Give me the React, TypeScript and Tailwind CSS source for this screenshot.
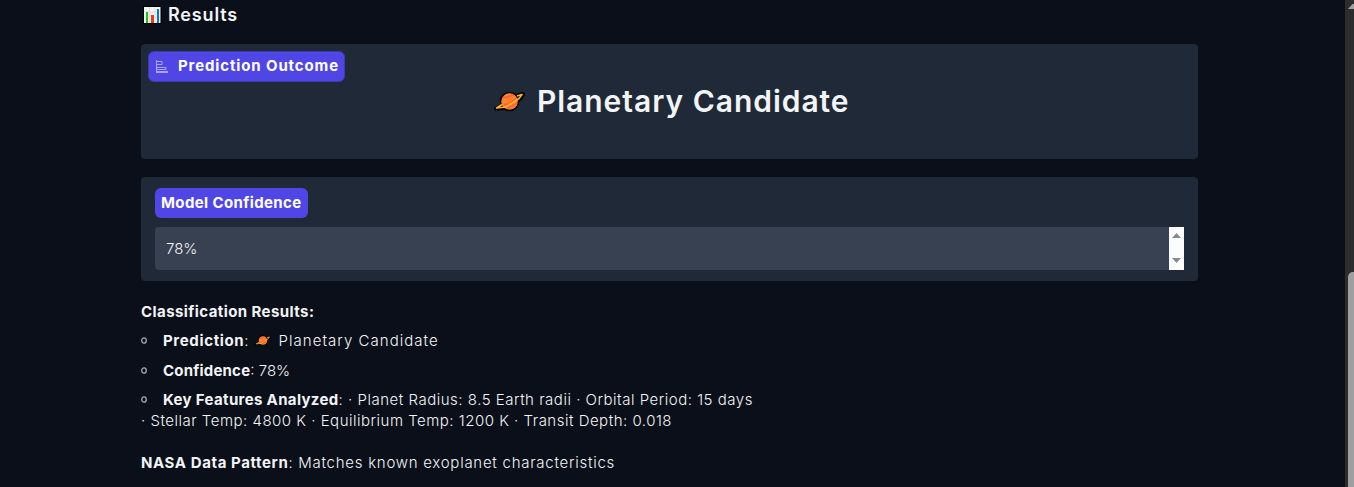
function Planet({ className }: { className: string }) {
  return (
    <svg viewBox="0 0 31 21" className={className} aria-hidden="true">
      <g stroke="#000" strokeLinejoin="round" strokeWidth="3">
        <circle cx="15.5" cy="10.5" r="8.300" />
        <path d="M8 14.500 2 17.500 13 17 27 7 29 3 23 4.500" fill="none" strokeWidth="4" />
      </g>
      <circle cx="15.5" cy="10.5" r="8.300" fill="#ff822d" />
      <path d="M9 6.500Q15 7 19 3.500M10 14Q16 13 22 8M13 17Q18 16 23 12" fill="none" stroke="#f9632f" strokeWidth="2" />
      <path d="M8 13.500 2.500 17 12 16 25 7.500 28 3.500 23 5" fill="none" stroke="#ffb02e" strokeWidth="1.6" strokeLinejoin="round" />
    </svg>
  );
}

function ChartEmoji() {
  return (
    <svg viewBox="0 0 19 18" className="h-[18px] w-[19px]" aria-hidden="true">
      <path d="M0 0h19v18H0z" fill="#000" />
      <path d="M1 1h16.500v16H1z" fill="#f4f4f4" />
      <path d="M1 6h16M1 11h16M6.500 1v16M12 1v16" stroke="#ddd" />
      <path d="M3 6h2v11H3z" fill="#16c60c" />
      <path d="M8 9h3v8H8z" fill="#f03a17" />
      <path d="M14 3h2v14h-2z" fill="#0078d4" />
    </svg>
  );
}

function LabelIcon() {
  return (
    <svg viewBox="0 0 14 14" className="mr-[9px] h-[14px] w-[14px]" fill="none" stroke="#a9a3f2" aria-hidden="true">
      <path d="M1.500 0v13M1 1.500h6v3H1M1 7.500h10v2H1" />
      <path d="M1 12h12" strokeWidth="2" />
    </svg>
  );
}

function Bullet() {
  return (
    <svg viewBox="0 0 6 7" className="mr-[16px] h-[7px] w-[6px] shrink-0" aria-hidden="true">
      <ellipse cx="3" cy="3.500" rx="2.300" ry="2.700" fill="none" stroke="#a5a8ae" strokeWidth="1.300" />
    </svg>
  );
}

export default function App() {
  return (
    <div className="flex h-[487px] w-full overflow-hidden bg-[#0b0f19] font-['Inter',sans-serif] text-[15px] text-gray-100">
      <main className="ml-[141px] w-[1057px] shrink-0">
        <h2 className="flex h-[44px] items-start pt-[4px] pl-[2px] text-[18px] leading-[22px] font-semibold">
          <span className="mt-[2px] mr-[6px]"><ChartEmoji /></span>
          <span className="tracking-[0.85px]">Results</span>
        </h2>

        <section className="h-[115px] rounded-[4px] bg-[#1f2937] pt-[7px]">
          <div className="ml-[7px] flex h-[31px] w-[197px] items-center rounded-[6px] border border-[#3f3ba8] bg-[#4f46e5] pl-[6px] font-bold whitespace-nowrap text-white">
            <LabelIcon />
            <span className="tracking-[0.87px]">Prediction Outcome</span>
          </div>
          <h1 className="mt-[2px] flex h-[34px] items-center pl-[353px] text-[30px] leading-[34px] font-semibold whitespace-nowrap">
            <Planet className="mr-[12px] h-[21px] w-[31px]" />
            <span className="tracking-[0.96px]">Planetary Candidate</span>
          </h1>
        </section>

        <section className="mt-[18px] h-[104px] rounded-[4px] bg-[#1f2937] px-[14px] pt-[11px]">
          <div className="flex h-[30px] w-[153px] items-center rounded-[6px] bg-[#4f46e5] pl-[6px] font-bold whitespace-nowrap text-white">
            <span className="tracking-[0.38px]">Model Confidence</span>
          </div>
          <div className="mt-[9px] flex h-[43px] overflow-hidden rounded-l-[4px] bg-[#374151]">
            <span className="flex-1 pl-[11px] leading-[43px] font-light">78%</span>
            <div className="flex w-[15px] flex-col items-center justify-between bg-[#fcfcfc] pt-[6px] pb-[7px]">
              <svg viewBox="0 0 9 5" className="h-[5px] w-[9px]"><path d="M0 5 4.500 0 9 5z" fill="#8b8b8b" /></svg>
              <svg viewBox="0 0 9 5" className="h-[5px] w-[9px]"><path d="M0 0 4.500 5 9 0z" fill="#8b8b8b" /></svg>
            </div>
          </div>
        </section>

        <div className="pt-[20px] leading-[21px] font-light whitespace-nowrap">
          <p className="font-bold"><span className="tracking-[0.42px]">Classification Results:</span></p>
          <ul>
            <li className="mt-[8px] flex items-center">
              <Bullet />
              <span><b className="font-bold tracking-[0.65px]">Prediction</b>:</span>
              <Planet className="mr-[8px] ml-[6px] h-[11px] w-[16px]" />
              <span className="tracking-[1.03px]">Planetary Candidate</span>
            </li>
            <li className="mt-[9px] flex items-center">
              <Bullet />
              <span><b className="font-bold tracking-[0.2px]">Confidence</b>: 78%</span>
            </li>
            <li className="mt-[8px]">
              <div className="flex items-center">
                <Bullet />
                <b className="font-bold tracking-[0.35px]">Key Features Analyzed</b>
                <span className="tracking-[0.51px]">: · Planet Radius: 8.5 Earth radii · Orbital Period: 15 days</span>
              </div>
              <div><span className="tracking-[0.5px]">· Stellar Temp: 4800 K · Equilibrium Temp: 1200 K · Transit Depth: 0.018</span></div>
            </li>
          </ul>
          <p className="mt-[21px]">
            <b className="font-bold tracking-[0.6px]">NASA Data Pattern</b>
            <span className="tracking-[0.74px]">: Matches known exoplanet characteristics</span>
          </p>
        </div>
      </main>
      <aside className="ml-auto flex h-full w-[9px] flex-col items-end overflow-hidden bg-[#2c2c2c]">
        <svg viewBox="0 0 6 5" className="mt-[4px] h-[5px] w-[6px]"><path d="M0 5 4.500 0H6v5z" fill="#a0a0a0" /></svg>
        <div className="mt-[263px] w-[6px] flex-1 rounded-tl-[5px] bg-[#9f9f9f]" />
      </aside>
    </div>
  );
}
